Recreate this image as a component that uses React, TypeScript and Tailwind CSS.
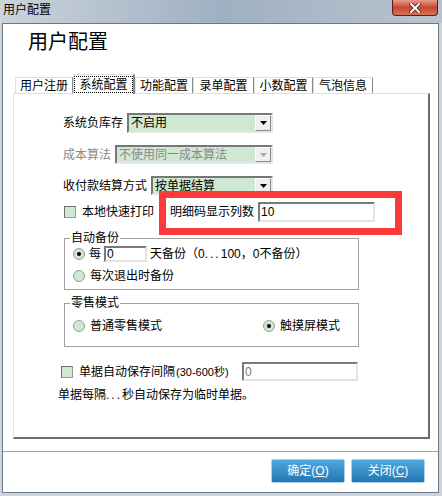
import React from "react";

function Tri({ disabled }: { disabled?: boolean }) {
  return (
    <svg width="7" height="4" viewBox="0 0 7 4">
      <path d="M0 0H7L3.5 4Z" fill={disabled ? "#a8a8a8" : "#000"} />
    </svg>
  );
}

function Select({ className, text, disabled }: { className: string; text: string; disabled?: boolean }) {
  return (
    <div
      className={
        "flex h-full items-center border-2 border-t-[#777] border-l-[#777] border-r-[#e6e6e6] border-b-[#e6e6e6] bg-[#cfe8d2] " +
        className
      }
    >
      <span className={"flex-1 pl-[2px] text-[12px] leading-[14px] " + (disabled ? "text-[#8a8a8a]" : "text-black")}>
        {text}
      </span>
      <div className="flex h-full w-[16px] items-center justify-center border border-t-white border-l-white border-r-[#8a8a8a] border-b-[#8a8a8a] bg-[#efefef]">
        <Tri disabled={disabled} />
      </div>
    </div>
  );
}

function Radio({ checked }: { checked?: boolean }) {
  return (
    <div className="flex h-[12px] w-[12px] shrink-0 items-center justify-center rounded-full border border-[#9a9a9a] bg-[#cfe8d2]">
      {checked && <div className="h-[4px] w-[4px] rounded-full bg-black" />}
    </div>
  );
}

function Check() {
  return <div className="h-[12px] w-[12px] shrink-0 border border-t-[#6f6f6f] border-l-[#6f6f6f] border-r-[#9a9a9a] border-b-[#9a9a9a] bg-[#cfe8d2]" />;
}

function Input({ className, value, gray }: { className: string; value: string; gray?: boolean }) {
  return (
    <div
      className={
        "flex items-center border-2 border-t-[#7a7a7a] border-l-[#7a7a7a] border-r-[#e3e3e3] border-b-[#e3e3e3] bg-white pl-[1px] text-[12px] leading-[14px] " +
        (gray ? "text-[#777] " : "text-black ") +
        className
      }
    >
      {value}
    </div>
  );
}

function Tab({ label, w, selected }: { label: string; w: string; selected?: boolean }) {
  if (selected) {
    return (
      <div className={"relative z-10 -mb-px flex h-[20px] items-start justify-center border-t border-l border-r-2 border-t-[#e0e0e0] border-l-[#e0e0e0] border-r-[#8a8a8a] bg-white pt-[1px] " + w}>
        <div className="flex h-[17px] w-full items-center justify-center border border-dotted border-black text-[12px] leading-[14px]">
          {label}
        </div>
      </div>
    );
  }
  return (
    <div className={"flex h-[16px] items-center justify-center border-t border-l border-r border-t-[#e0e0e0] border-l-[#e0e0e0] border-r-[#8a8a8a] text-[12px] leading-[14px] " + w}>
      {label}
    </div>
  );
}

export default function App() {
  return (
    <div className="flex h-[496px] w-[442px] flex-col overflow-hidden bg-[#cdd4dc] font-['Liberation_Sans','Noto_Sans_CJK_SC',sans-serif] text-black">
      {/* title bar */}
      <div className="flex h-[23px] shrink-0 items-start justify-between bg-linear-to-r from-[#cbd3dc] via-[#9fb0c2] to-[#b9c3ce] pl-[3px] pr-[4px]">
        <span className="pt-[3px] text-[12px] leading-[14px]">用户配置</span>
        <div className="flex h-[16px] w-[46px] items-center justify-center rounded-b-[4px] border border-t-0 border-[#5c2018] bg-linear-to-b from-[#e59a88] via-[#c8442f] to-[#d9735a]">
          <svg width="12" height="10" viewBox="0 0 12 10">
            <path d="M2 1L10 9M10 1L2 9" stroke="#4a1a12" strokeWidth="3.4" strokeLinecap="square" />
            <path d="M2 1L10 9M10 1L2 9" stroke="#fff" strokeWidth="2" strokeLinecap="square" />
          </svg>
        </div>
      </div>

      {/* client */}
      <div className="ml-[2px] flex h-[470px] w-[437px] flex-col border border-[#6b7885] bg-white">
        <div className="h-[50px] shrink-0 pl-[25px] pt-[6px] text-[20px] leading-[24px]">用户配置</div>

        <div className="ml-[10px] w-[417px]">
          <div className="flex h-[19px] items-end pl-[2px]">
            <Tab label="用户注册" w="w-[58px]" />
            <Tab label="系统配置" w="w-[62px]" selected />
            <Tab label="功能配置" w="w-[58px]" />
            <Tab label="录单配置" w="w-[61px]" />
            <Tab label="小数配置" w="w-[59px]" />
            <Tab label="气泡信息" w="w-[60px]" />
          </div>
          <div className="relative flex h-[346px] flex-col border-t border-l border-r-2 border-b-2 border-t-[#e0e0e0] border-l-[#e0e0e0] border-r-[#6c6c6c] border-b-[#6c6c6c] text-[12px] leading-[14px]">
            {/* row 1 */}
            <div className="mt-[19px] flex h-[20px] items-center pl-[49px]">
              <span className="w-[64px]">系统负库存</span>
              <Select className="w-[146px]" text="不启用" />
            </div>
            {/* row 2 */}
            <div className="mt-[12px] flex h-[19px] items-center pl-[49px]">
              <span className="w-[52px] text-[#8a8a8a]">成本算法</span>
              <Select className="w-[158px]" text="不使用同一成本算法" disabled />
            </div>
            {/* row 3 */}
            <div className="mt-[12px] flex h-[19px] items-center pl-[49px]">
              <span className="w-[88px]">收付款结算方式</span>
              <Select className="w-[122px]" text="按单据结算" />
            </div>
            {/* row 4 */}
            <div className="mt-[7px] flex h-[20px] items-center pl-[50px]">
              <Check />
              <span className="ml-[6px] w-[88px]">本地快速打印</span>
              <span className="w-[88px]">明细码显示列数</span>
              <Input className="h-[20px] w-[117px]" value="10" />
            </div>

            {/* group 1 */}
            <div className="relative ml-[50px] mt-[16px] h-[52px] w-[295px] border border-[#a0a0a0]">
              <span className="absolute -top-[8px] left-[5px] bg-white px-px">自动备份</span>
              <div className="mt-[7px] flex h-[16px] items-center pl-[8px]">
                <Radio checked />
                <span className="ml-[4px]">每</span>
                <Input className="ml-[3px] h-[16px] w-[43px]" value="0" />
                <span className="ml-[3px]">
                  天备份（0<span className="tracking-[2px]">...</span>100，0不备份）
                </span>
              </div>
              <div className="mt-[6px] flex h-[16px] items-center pl-[8px]">
                <Radio />
                <span className="ml-[5px]">每次退出时备份</span>
              </div>
            </div>

            {/* group 2 */}
            <div className="relative ml-[50px] mt-[13px] h-[44px] w-[295px] border border-[#a0a0a0]">
              <span className="absolute -top-[8px] left-[5px] bg-white px-px">零售模式</span>
              <div className="mt-[14px] flex h-[16px] items-center pl-[8px]">
                <Radio />
                <span className="ml-[5px] w-[173px]">普通零售模式</span>
                <Radio checked />
                <span className="ml-[5px]">触摸屏模式</span>
              </div>
            </div>

            {/* auto save row */}
            <div className="mt-[15px] flex h-[19px] items-center pl-[47px]">
              <Check />
              <span className="ml-[6px] flex w-[163px] items-center">
                单据自动保存间隔<span className="ml-px text-[11px]">(30-600秒)</span>
              </span>
              <Input className="h-[19px] w-[116px] text-[11px]" value="0" gray />
            </div>
            <div className="mt-[7px] pl-[44px]">
              单据每隔<span className="tracking-[2px]">...</span>秒自动保存为临时单据。
            </div>

            {/* red annotation */}
            <div className="pointer-events-none absolute left-[145px] top-[97px] h-[44px] w-[243px] border-[7px] border-[#fb3a3a]" />
          </div>
        </div>

        <div className="mt-[12px] h-px w-full bg-[#a0a0a0]" />
        <div className="mt-[7px] flex h-[24px] justify-end gap-[6px] pr-[13px]">
          <button className="flex h-[24px] w-[74px] items-center justify-center rounded-[2px] border border-[#a8d0ec] bg-linear-to-b from-[#4fa8de] to-[#2277b3] text-[12px] leading-[14px] text-white">
            确定(<u>O</u>)
          </button>
          <button className="flex h-[24px] w-[74px] items-center justify-center rounded-[2px] border border-[#a8d0ec] bg-linear-to-b from-[#4fa8de] to-[#2277b3] text-[12px] leading-[14px] text-white">
            关闭(<u>C</u>)
          </button>
        </div>
      </div>
    </div>
  );
}
